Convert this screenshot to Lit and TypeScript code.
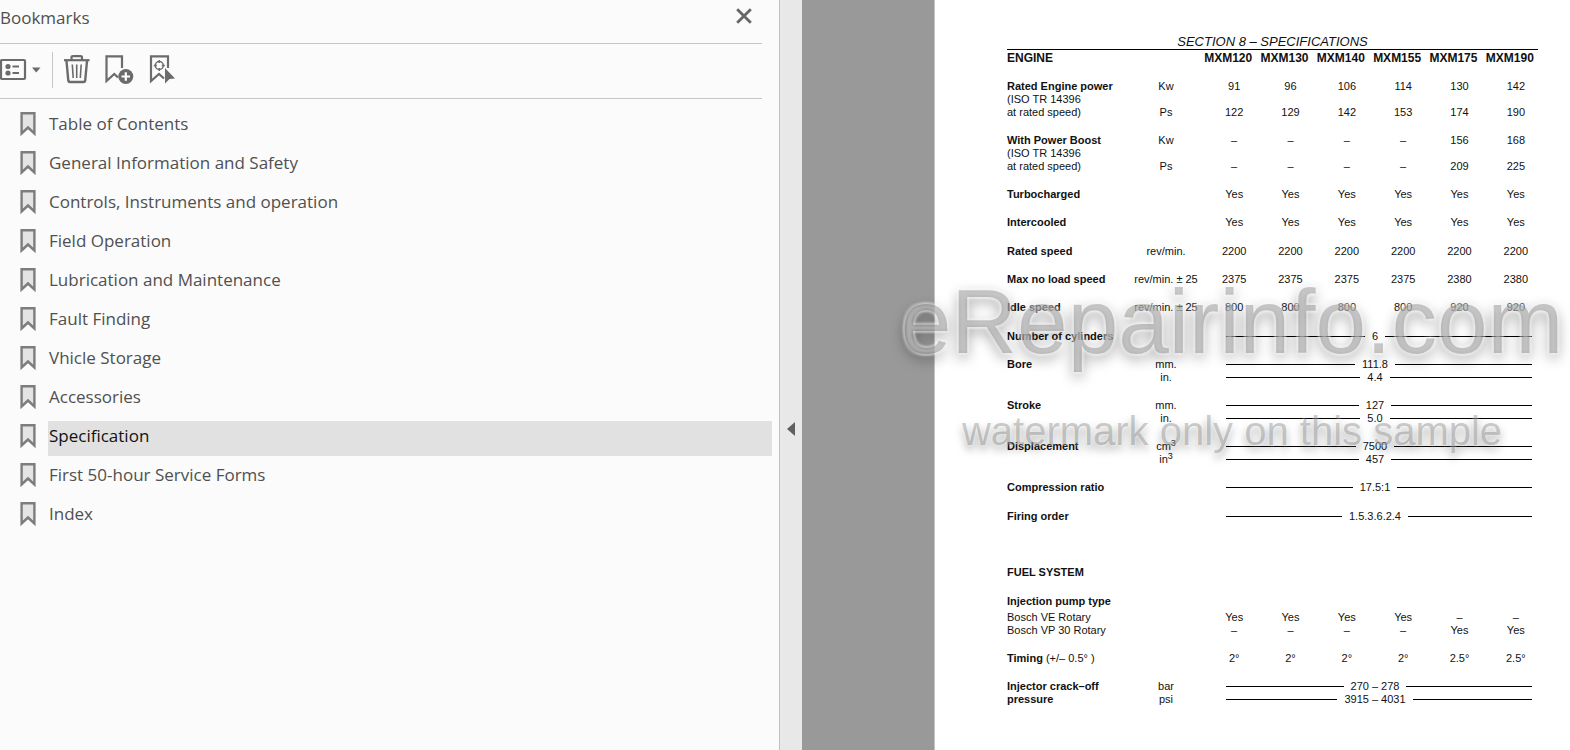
import { LitElement, html, css, nothing } from "lit";
import { customElement, state } from "lit/decorators.js";
import { classMap } from "lit/directives/class-map.js";

const BOOKMARKS = [
  "Table of Contents",
  "General Information and Safety",
  "Controls, Instruments and operation",
  "Field Operation",
  "Lubrication and Maintenance",
  "Fault Finding",
  "Vhicle Storage",
  "Accessories",
  "Specification",
  "First 50-hour Service Forms",
  "Index",
];

@customElement("bookmark-panel")
export class BookmarkPanel extends LitElement {
  @state() private selected = "Specification";

  static styles = css`
    :host {
      display: block;
      background: #fbfbfb;
      color: #505050;
      font-family: "Open Sans", "Noto Sans", sans-serif;
      font-size: 17px;
      line-height: 24px;
    }
    button {
      display: block;
      padding: 0;
      border: 0;
      background: none;
      color: inherit;
      cursor: pointer;
    }
    svg {
      display: block;
    }
    .head {
      display: flex;
      justify-content: space-between;
      align-items: flex-start;
      height: 37px;
      margin-right: 17px;
      padding: 6px 9px 0 0;
      border-bottom: 1px solid #c6c6c6;
    }
    .title {
      margin: 0;
      font-size: 17px;
      font-weight: 400;
    }
    .close {
      margin-top: 1px;
    }
    .tools {
      display: flex;
      align-items: center;
      height: 52px;
      margin-right: 17px;
      padding-bottom: 2px;
      border-bottom: 1px solid #c6c6c6;
      color: #6b6b6b;
    }
    .divider {
      width: 1px;
      height: 36px;
      margin: 0 9px 0 10px;
      background: #c6c6c6;
    }
    .group {
      display: flex;
      gap: 12px;
    }
    .list {
      display: flex;
      flex-direction: column;
      gap: 4px;
      margin: 0;
      padding: 10px 7px 0 0;
      list-style: none;
    }
    .item {
      display: flex;
    }
    .mark {
      width: 28px;
      padding: 2px 0 0 20px;
    }
    .link {
      flex: 1;
      height: 32px;
      padding: 3px 0 0 1px;
      color: inherit;
      text-decoration: none;
    }
    .current {
      background: #e1e1e1;
      color: #111;
    }
  `;

  private pick(event: Event, name: string) {
    event.preventDefault();
    this.selected = name;
  }

  render() {
    return html`
      <header class="head">
        <h1 class="title">Bookmarks</h1>
        <button class="close" aria-label="Close bookmarks">
          <svg width="18" height="18" viewBox="0 0 18 18">
            <path d="M2.200 2.200L15.800 15.800M15.800 2.200L2.200 15.800" stroke="#666" stroke-width="2.800" />
          </svg>
        </button>
      </header>
      <div class="tools" role="toolbar">
        <button aria-label="Options">
          <svg width="42" height="36" viewBox="0 52 42 36">
            <rect x="1" y="60" width="24" height="19" rx="1" fill="none" stroke="currentColor" stroke-width="2.200" />
            <circle cx="8" cy="66.500" r="2.600" fill="currentColor" />
            <circle cx="8" cy="73" r="2.600" fill="currentColor" />
            <path d="M12.500 66.500H19M12.500 73H19" stroke="currentColor" stroke-width="2.200" />
            <path d="M32 67.500H40.500L36.200 72.500Z" fill="currentColor" />
          </svg>
        </button>
        <span class="divider"></span>
        <div class="group">
          <button aria-label="Delete bookmark">
            <svg width="30" height="36" viewBox="62 52 30 36" fill="none" stroke="currentColor">
              <path d="M64 60.200H89.500" stroke-width="2.200" />
              <path d="M71.500 60V57.500Q71.500 56.200 73 56.200H80.500Q82 56.200 82 57.500V60" stroke-width="2.200" />
              <path d="M66.500 61L68.300 80.500Q68.500 82 70 82H83.500Q85 82 85.200 80.500L87 61" stroke-width="2.400" />
              <path d="M72.300 64.500L73.200 78M76.700 64.500V78M81.200 64.500L80.300 78" stroke-width="1.600" />
            </svg>
          </button>
          <button aria-label="New bookmark">
            <svg width="32" height="36" viewBox="104 52 32 36">
              <path d="M122 68V56.300H106.500V81L114.300 74L118 77.500" fill="none" stroke="currentColor" stroke-width="2.200" />
              <circle cx="125.800" cy="76.500" r="7.500" fill="currentColor" />
              <path d="M121.500 76.500H130M125.800 72.200V80.800" stroke="#fff" stroke-width="2.200" />
            </svg>
          </button>
          <button aria-label="Find current bookmark">
            <svg width="32" height="36" viewBox="148 52 32 36">
              <path d="M168 68V56.300H151V81L159 74L164 78.500" fill="none" stroke="currentColor" stroke-width="2.200" />
              <circle cx="159.300" cy="65.500" r="4" fill="none" stroke="currentColor" stroke-width="1.500" />
              <path d="M159.300 60V63M159.300 68V71M153.800 65.500H156.800M161.800 65.500H164.800" stroke="currentColor" stroke-width="1.400" />
              <path d="M165 68L175 78.500L169.500 79L165 83.500Z" fill="currentColor" />
            </svg>
          </button>
        </div>
      </div>
      <ul class="list">
        ${BOOKMARKS.map(
          (name) => html`
            <li class="item">
              <span class="mark">
                <svg width="16" height="25" viewBox="0 0 16 25">
                  <path d="M1.600 2.200H14.400V22.500L8 16.500L1.600 22.500Z" fill="#e4e4e4" stroke="#7d7d7d" stroke-width="2.400" />
                </svg>
              </span>
              <a
                href="#"
                class=${classMap({ link: true, current: name === this.selected })}
                @click=${(e: Event) => this.pick(e, name)}
                >${name}</a
              >
            </li>
          `
        )}
      </ul>
    `;
  }
}

type Row = {
  label?: unknown;
  plain?: boolean;
  unit?: unknown;
  values?: string[];
  span?: string;
  space?: "tight" | "gap" | "wide" | "section";
};

const six = (value: string) => Array<string>(6).fill(value);
const MODELS = ["MXM120", "MXM130", "MXM140", "MXM155", "MXM175", "MXM190"];

const ROWS: Row[] = [
  { label: "Rated Engine power", unit: "Kw", values: ["91", "96", "106", "114", "130", "142"], space: "gap" },
  { label: "(ISO TR 14396", plain: true },
  { label: "at rated speed)", plain: true, unit: "Ps", values: ["122", "129", "142", "153", "174", "190"] },
  { label: "With Power Boost", unit: "Kw", values: ["–", "–", "–", "–", "156", "168"], space: "gap" },
  { label: "(ISO TR 14396", plain: true },
  { label: "at rated speed)", plain: true, unit: "Ps", values: ["–", "–", "–", "–", "209", "225"] },
  { label: "Turbocharged", values: six("Yes"), space: "gap" },
  { label: "Intercooled", values: six("Yes"), space: "gap" },
  { label: "Rated speed", unit: "rev/min.", values: six("2200"), space: "wide" },
  { label: "Max no load speed", unit: "rev/min. ± 25", values: ["2375", "2375", "2375", "2375", "2380", "2380"], space: "gap" },
  { label: "Idle speed", unit: "rev/min. ± 25", values: ["800", "800", "800", "800", "920", "920"], space: "gap" },
  { label: "Number of cylinders", span: "6", space: "wide" },
  { label: "Bore", unit: "mm.", span: "111.8", space: "gap" },
  { unit: "in.", span: "4.4" },
  { label: "Stroke", unit: "mm.", span: "127", space: "gap" },
  { unit: "in.", span: "5.0" },
  { label: "Displacement", unit: html`cm<sup>3</sup>`, span: "7500", space: "gap" },
  { unit: html`in<sup>3</sup>`, span: "457" },
  { label: "Compression ratio", span: "17.5:1", space: "gap" },
  { label: "Firing order", span: "1.5.3.6.2.4", space: "wide" },
  { label: "FUEL SYSTEM", space: "section" },
  { label: "Injection pump type", space: "wide" },
  { label: "Bosch VE Rotary", plain: true, values: ["Yes", "Yes", "Yes", "Yes", "–", "–"], space: "tight" },
  { label: "Bosch VP 30 Rotary", plain: true, values: ["–", "–", "–", "–", "Yes", "Yes"] },
  { label: html`Timing <span class="plain">(+/– 0.5° )</span>`, values: ["2°", "2°", "2°", "2°", "2.5°", "2.5°"], space: "gap" },
  { label: "Injector crack–off", unit: "bar", span: "270 – 278", space: "gap" },
  { label: "pressure", unit: "psi", span: "3915 – 4031" },
];

@customElement("spec-sheet")
export class SpecSheet extends LitElement {
  static styles = css`
    :host {
      display: block;
      padding: 34px 26px 40px 72px;
      background: #fff;
      color: #111;
      font-family: "Liberation Sans", Arial, sans-serif;
      font-size: 11px;
      line-height: 13px;
    }
    .heading {
      margin: 0 6px 0 0;
      border-bottom: 1px solid #000;
      font-size: 13px;
      font-style: italic;
      font-weight: 400;
      line-height: 15px;
      text-align: center;
    }
    .specs {
      width: 100%;
      table-layout: fixed;
      border-collapse: collapse;
    }
    .c-label {
      width: 119px;
    }
    .c-unit {
      width: 80px;
    }
    th,
    td {
      height: 13px;
      padding: 0;
      text-align: center;
      vertical-align: bottom;
      white-space: nowrap;
      font-weight: 400;
    }
    .models th {
      height: 15px;
      font-size: 12px;
      font-weight: 700;
    }
    .model {
      margin-left: -12px;
    }
    th.label {
      text-align: left;
      font-weight: 700;
    }
    th.plain,
    .plain {
      font-weight: 400;
    }
    .tight > * {
      padding-top: 3px;
    }
    .gap > * {
      padding-top: 15px;
    }
    .wide > * {
      padding-top: 16px;
    }
    .section > * {
      padding-top: 43px;
    }
    .span {
      display: grid;
      grid-template-columns: 1fr auto 1fr;
      align-items: center;
      column-gap: 7px;
      padding: 0 20px;
    }
    .span::before,
    .span::after {
      content: "";
      height: 1px;
      background: #000;
    }
    .span::after {
      margin-right: -8px;
    }
    sup {
      font-size: 9px;
      line-height: 0;
      vertical-align: 4px;
    }
  `;

  private row(r: Row) {
    return html`
      <tr class=${r.space ?? ""}>
        <th scope="row" class=${classMap({ label: true, plain: !!r.plain })}>${r.label ?? nothing}</th>
        <td>${r.unit ?? nothing}</td>
        ${r.span
          ? html`<td colspan="6"><div class="span">${r.span}</div></td>`
          : (r.values ?? six("")).map((v) => html`<td>${v}</td>`)}
      </tr>
    `;
  }

  render() {
    return html`
      <h2 class="heading">SECTION 8 – SPECIFICATIONS</h2>
      <table class="specs">
        <colgroup>
          <col class="c-label" />
          <col class="c-unit" />
          <col span="6" />
        </colgroup>
        <thead>
          <tr class="models">
            <th scope="col" class="label">ENGINE</th>
            <th></th>
            ${MODELS.map((m) => html`<th scope="col"><span class="model">${m}</span></th>`)}
          </tr>
        </thead>
        <tbody>
          ${ROWS.map((r) => this.row(r))}
        </tbody>
      </table>
    `;
  }
}

@customElement("app-root")
export class AppRoot extends LitElement {
  static styles = css`
    :host {
      display: flex;
      min-height: 100vh;
      overflow: hidden;
      background: #999;
    }
    .side {
      flex: 802 1 0;
      display: flex;
    }
    .panel {
      flex: 1;
    }
    .splitter {
      display: flex;
      justify-content: center;
      align-items: flex-start;
      width: 23px;
      padding: 422px 0 0;
      border: 0;
      border-left: 1px solid #c0c0c0;
      background: #e8e8e8;
      cursor: pointer;
    }
    .viewer {
      position: relative;
      flex: 768 1 0;
      display: flex;
    }
    .sheet {
      flex: 1;
      margin-left: 132px;
      border-left: 1px solid #c4c4c4;
    }
    .watermark {
      position: absolute;
      top: 268px;
      left: 92px;
      right: 0;
      display: flex;
      flex-direction: column;
      align-items: center;
      color: rgba(0, 0, 0, 0.2);
      font-family: "Liberation Sans", Arial, sans-serif;
      white-space: nowrap;
      pointer-events: none;
    }
    .big {
      font-size: 91px;
      line-height: 108px;
      text-shadow: 2px 2px 2px rgba(255, 255, 255, 0.28), -2px -2px 2px rgba(255, 255, 255, 0.28),
        2px -2px 2px rgba(255, 255, 255, 0.28), -2px 2px 2px rgba(255, 255, 255, 0.28),
        0 5px 14px rgba(0, 0, 0, 0.4);
    }
    .small {
      margin-top: 30px;
      font-size: 40px;
      line-height: 50px;
      text-shadow: 1px 1px 2px rgba(255, 255, 255, 0.3), -1px -1px 2px rgba(255, 255, 255, 0.3),
        0 5px 9px rgba(0, 0, 0, 0.35);
    }
  `;

  render() {
    return html`
      <div class="side">
        <bookmark-panel class="panel"></bookmark-panel>
        <button class="splitter" aria-label="Collapse panel">
          <svg width="8" height="14" viewBox="0 0 8 14"><path d="M8 0V14L0 7Z" fill="#606060" /></svg>
        </button>
      </div>
      <main class="viewer">
        <spec-sheet class="sheet"></spec-sheet>
        <div class="watermark">
          <span class="big">eRepairinfo.com</span>
          <span class="small">watermark only on this sample</span>
        </div>
      </main>
    `;
  }
}
